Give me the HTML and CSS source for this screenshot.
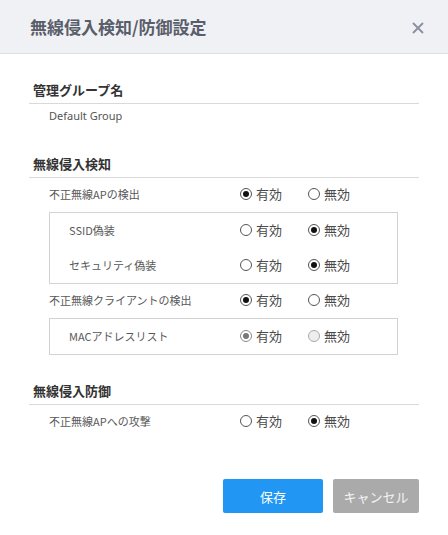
FILE: index.html
```html
<!DOCTYPE html>
<html lang="ja">
<head>
<meta charset="utf-8">
<title>無線侵入検知/防御設定</title>
<link rel="stylesheet" href="styles.css">
</head>
<body>
<div class="dialog">
  <div class="header">
    <div class="title">無線侵入検知/防御設定</div>
    <div class="close">
      <svg width="12" height="12" viewBox="0 0 12 12"><path d="M1 1 L11 11 M11 1 L1 11" stroke="#8a8fa0" stroke-width="1.8" fill="none"/></svg>
    </div>
  </div>
  <div class="content">
    <div class="heading h1">管理グループ名</div>
    <div class="value">Default Group</div>

    <div class="heading h2">無線侵入検知</div>
    <div class="row">
      <div class="label">不正無線APの検出</div>
      <div class="opts">
        <span class="opt"><span class="radio on"></span>有効</span>
        <span class="opt"><span class="radio"></span>無効</span>
      </div>
    </div>
    <div class="box">
      <div class="row boxrow">
        <div class="label">SSID偽装</div>
        <div class="opts">
          <span class="opt"><span class="radio"></span>有効</span>
          <span class="opt"><span class="radio on"></span>無効</span>
        </div>
      </div>
      <div class="row boxrow">
        <div class="label">セキュリティ偽装</div>
        <div class="opts">
          <span class="opt"><span class="radio"></span>有効</span>
          <span class="opt"><span class="radio on"></span>無効</span>
        </div>
      </div>
    </div>
    <div class="row">
      <div class="label">不正無線クライアントの検出</div>
      <div class="opts">
        <span class="opt"><span class="radio on"></span>有効</span>
        <span class="opt"><span class="radio"></span>無効</span>
      </div>
    </div>
    <div class="box">
      <div class="row boxrow">
        <div class="label">MACアドレスリスト</div>
        <div class="opts">
          <span class="opt"><span class="radio on dis"></span>有効</span>
          <span class="opt"><span class="radio dis"></span>無効</span>
        </div>
      </div>
    </div>

    <div class="heading h3">無線侵入防御</div>
    <div class="row">
      <div class="label">不正無線APへの攻撃</div>
      <div class="opts">
        <span class="opt"><span class="radio"></span>有効</span>
        <span class="opt"><span class="radio on"></span>無効</span>
      </div>
    </div>

    <div class="buttons">
      <button class="btn save">保存</button>
      <button class="btn cancel">キャンセル</button>
    </div>
  </div>
</div>
</body>
</html>
```
FILE: styles.css
```css
html, body {
  margin: 0;
  padding: 0;
  background: #ffffff;
}
body {
  font-family: "Noto Sans", "Noto Sans CJK JP", sans-serif;
  color: #333333;
}
.dialog {
  width: 448px;
  height: 535px;
  background: #ffffff;
}
.header {
  height: 53px;
  background: #f0f1f5;
  border-bottom: 1px solid #dedfe4;
  display: flex;
  align-items: center;
  justify-content: space-between;
  padding: 0 24px 0 30px;
}
.title {
  font-family: "Noto Sans CJK JP", sans-serif;
  font-size: 17px;
  font-weight: bold;
  color: #5a5e6a;
  line-height: 20px;
}
.close {
  width: 12px;
  height: 12px;
  display: flex;
  margin-top: 2px;
}
.content {
  padding: 0 29px;
}
.heading {
  font-family: "Noto Sans CJK JP", sans-serif;
  font-size: 13px;
  font-weight: bold;
  color: #333333;
  line-height: 20px;
  padding: 0 0 3px 4px;
  border-bottom: 1px solid #d9d9d9;
}
.h1 { margin-top: 26px; }
.h2 { margin-top: 24px; }
.h3 { margin-top: 26px; }
.value {
  box-sizing: border-box;
  padding: 0 0 2px 20px;
  height: 26px;
  line-height: 24px;
  font-size: 11px;
  color: #555555;
}
.row {
  box-sizing: border-box;
  display: flex;
  align-items: center;
  height: 34px;
  padding: 0 0 2px 20px;
}
.label {
  width: 191px;
  font-family: "Noto Sans CJK JP", sans-serif;
  font-size: 11px;
  color: #585858;
}
.box {
  margin: 0 21px 0 20px;
  border: 1px solid #d3d3d3;
}
.row.boxrow {
  height: 35px;
  padding-left: 19px;
}
.boxrow .label {
  width: 171px;
}
.opts {
  display: flex;
}
.opt {
  display: flex;
  align-items: center;
  width: 68px;
  font-family: "Noto Sans CJK JP", sans-serif;
  font-size: 13px;
  color: #4a4a4a;
  line-height: 16px;
}
.radio {
  box-sizing: border-box;
  width: 12px;
  height: 12px;
  border-radius: 50%;
  border: 1px solid #555555;
  background: #ffffff;
  margin-right: 4px;
  display: flex;
  align-items: center;
  justify-content: center;
}
.radio.on::after {
  content: "";
  width: 6px;
  height: 6px;
  border-radius: 50%;
  background: #111111;
}
.radio.dis {
  border-color: #aaaaaa;
  background: #eeeeee;
}
.radio.on.dis {
  background: #ffffff;
  border-color: #8a8a8a;
}
.radio.on.dis::after {
  background: #777777;
}
.buttons {
  display: flex;
  justify-content: flex-end;
  gap: 10px;
  margin-top: 40px;
}
.btn {
  height: 34px;
  border: none;
  border-radius: 2px;
  font-family: "Noto Sans CJK JP", sans-serif;
  font-size: 13px;
  color: #ffffff;
  padding: 0;
}
.save {
  width: 100px;
  background: #2196f3;
}
.cancel {
  width: 86px;
  background: #aaaaaa;
  color: #f4f4f4;
}
```
